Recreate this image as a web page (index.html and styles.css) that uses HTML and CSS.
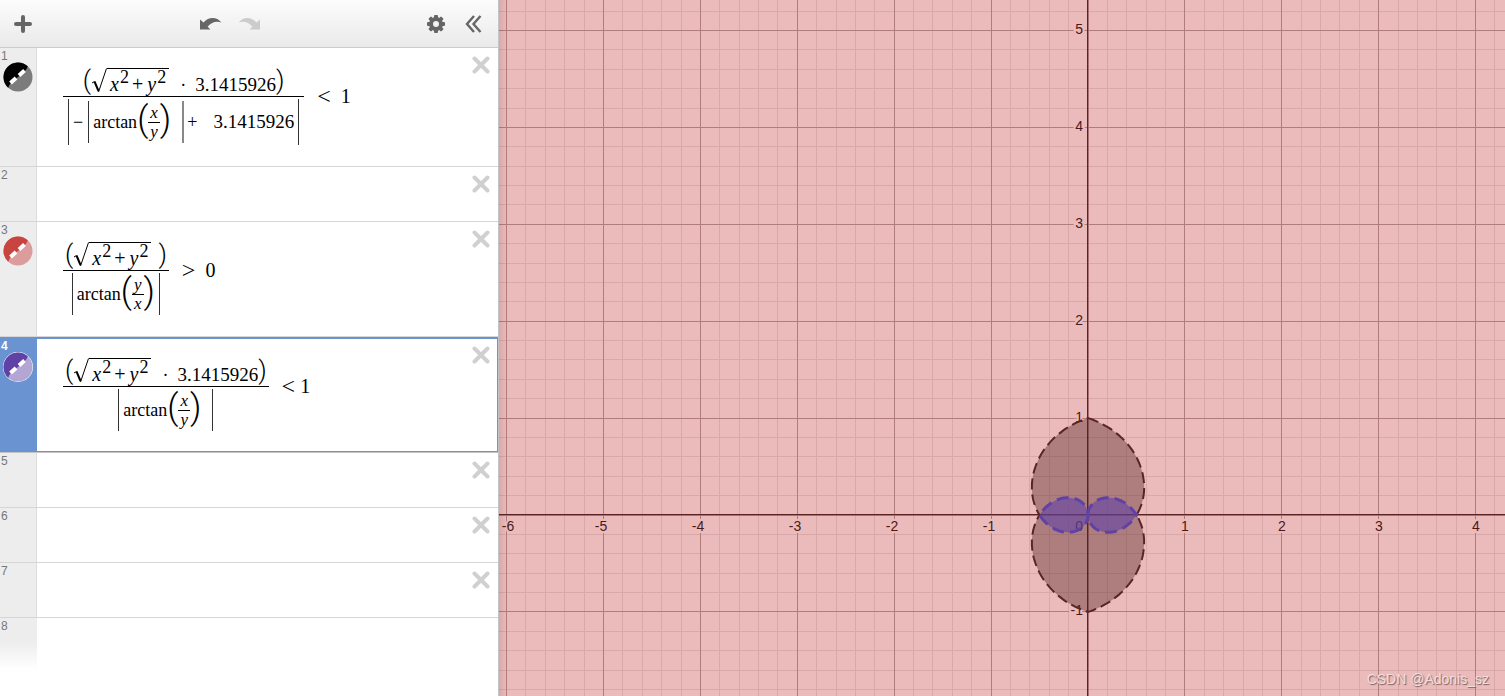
FILE: index.html
```html
<!DOCTYPE html>
<html lang="en">
<head>
<meta charset="utf-8">
<title>Graphing Calculator</title>
<link rel="stylesheet" href="styles.css">
</head>
<body>
<svg class="defs" aria-hidden="true">
  <symbol id="close" viewBox="0 0 18 18"><path d="M2.5 2.5 15.5 15.5M15.5 2.5 2.5 15.5" fill="none" stroke="currentColor" stroke-width="4" stroke-linecap="round"/></symbol>
  <symbol id="undo" viewBox="0 0 22 14"><path d="M0 2.500V12.500H10.500L7.600 9.700C10.500 6 15.500 3.600 21.300 5.400 16.800-.2 8.800-.6 3.500 5.600Z" fill="currentColor"/></symbol>
  <symbol id="shade" viewBox="0 0 30 30"><circle cx="15" cy="15" r="14.5" fill="currentColor" opacity=".48"/><path d="M5.2 25.7A14.5 14.5 0 1 1 24.8 4.3Q23.5 9 15 15 7 20 5.2 25.7Z" fill="currentColor"/><path d="M7.500 21 13 16M16 13.500 21.500 8.500" stroke="#fff" stroke-width="4" fill="none"/></symbol>
  <symbol id="root" viewBox="0 0 16 26"><path d="M1 15 3.500 13.500" stroke="#000" stroke-width="1" fill="none"/><path d="M3.500 13.500 7.500 23" stroke="#000" stroke-width="2" fill="none"/><path d="M7.500 24 15.500 .5" stroke="#000" stroke-width="1" fill="none"/></symbol>
</svg>
<div class="app">
  <section class="panel" aria-label="Expressions">
    <header class="toolbar">
      <button class="tool" aria-label="Add item"><svg width="18" height="18" viewBox="0 0 18 18"><path d="M9 2V16M2 9H16" stroke="currentColor" stroke-width="4" stroke-linecap="round"/></svg></button>
      <div class="group">
        <button class="tool" aria-label="Undo"><svg width="22" height="14"><use href="#undo"/></svg></button>
        <button class="tool faded" aria-label="Redo" disabled><svg class="flip" width="22" height="14"><use href="#undo"/></svg></button>
      </div>
      <div class="group">
        <button class="tool" aria-label="Settings"><svg width="18" height="18" viewBox="-9 -9 18 18"><g fill="currentColor"><rect x="-2" y="-9" width="4" height="18" rx="1"/><rect x="-2" y="-9" width="4" height="18" rx="1" transform="rotate(45)"/><rect x="-2" y="-9" width="4" height="18" rx="1" transform="rotate(90)"/><rect x="-2" y="-9" width="4" height="18" rx="1" transform="rotate(135)"/></g><circle r="5" fill="#f4f4f4" stroke="currentColor" stroke-width="4"/></svg></button>
        <button class="tool" aria-label="Hide list"><svg width="17" height="18" viewBox="0 0 17 18"><path d="M9 1 2 9 9 17M15.500 1 8.500 9 15.500 17" fill="none" stroke="currentColor" stroke-width="2.400"/></svg></button>
      </div>
    </header>
    <ol class="list">
      <li class="row">
        <div class="gutter"><span>1</span><button class="swatch black" aria-label="Toggle expression 1"><svg width="30" height="30"><use href="#shade"/></svg></button></div>
        <div class="math">
          <div class="frac">
            <div class="num"><span class="paren">(</span><svg class="root" width="16" height="26"><use href="#root"/></svg><span class="radicand"><i>x</i><sup>2</sup><span class="op">+</span><i>y</i><sup>2</sup></span><span class="dot">·</span><span class="value">3.1415926</span><span class="paren">)</span></div>
            <div class="den"><span class="abs tall"><span class="minus">−</span><span class="abs"><span>arctan</span><span class="paren big">(</span><span class="small"><i>x</i><i>y</i></span><span class="paren big">)</span><span class="space"></span></span><span class="plus">+</span><span class="value">3.1415926</span></span></div>
          </div>
          <span class="rel">&lt;</span><span class="rhs">1</span>
        </div>
        <button class="close" aria-label="Delete 1"><svg width="18" height="18"><use href="#close"/></svg></button>
      </li>
      <li class="row">
        <div class="gutter"><span>2</span></div><input class="blank" aria-label="Expression 2"><button class="close" aria-label="Delete 2"><svg width="18" height="18"><use href="#close"/></svg></button>
      </li>
      <li class="row">
        <div class="gutter"><span>3</span><button class="swatch red" aria-label="Toggle expression 3"><svg width="30" height="30"><use href="#shade"/></svg></button></div>
        <div class="math">
          <div class="frac">
            <div class="num"><span class="paren">(</span><svg class="root" width="16" height="26"><use href="#root"/></svg><span class="radicand"><i>x</i><sup>2</sup><span class="op">+</span><i>y</i><sup>2</sup></span><span class="space"></span><span class="paren">)</span></div>
            <div class="den"><span class="abs"><span>arctan</span><span class="paren big">(</span><span class="small"><i>y</i><i>x</i></span><span class="paren big">)</span></span></div>
          </div>
          <span class="rel">&gt;</span><span class="rhs">0</span>
        </div>
        <button class="close" aria-label="Delete 3"><svg width="18" height="18"><use href="#close"/></svg></button>
      </li>
      <li class="row selected">
        <div class="gutter"><span>4</span><button class="swatch purple" aria-label="Toggle expression 4"><svg width="30" height="30"><use href="#shade"/></svg></button></div>
        <div class="math">
          <div class="frac">
            <div class="num"><span class="paren">(</span><svg class="root" width="16" height="26"><use href="#root"/></svg><span class="radicand"><i>x</i><sup>2</sup><span class="op">+</span><i>y</i><sup>2</sup></span><span class="dot">·</span><span class="value">3.1415926</span><span class="paren">)</span></div>
            <div class="den"><span class="abs"><span>arctan</span><span class="paren big">(</span><span class="small"><i>x</i><i>y</i></span><span class="paren big">)</span><span class="space"></span></span></div>
          </div>
          <span class="rel tight">&lt;</span><span class="rhs">1</span>
        </div>
        <button class="close" aria-label="Delete 4"><svg width="18" height="18"><use href="#close"/></svg></button>
      </li>
      <li class="row">
        <div class="gutter"><span>5</span></div><input class="blank" aria-label="Expression 5"><button class="close" aria-label="Delete 5"><svg width="18" height="18"><use href="#close"/></svg></button>
      </li>
      <li class="row">
        <div class="gutter"><span>6</span></div><input class="blank" aria-label="Expression 6"><button class="close" aria-label="Delete 6"><svg width="18" height="18"><use href="#close"/></svg></button>
      </li>
      <li class="row">
        <div class="gutter"><span>7</span></div><input class="blank" aria-label="Expression 7"><button class="close" aria-label="Delete 7"><svg width="18" height="18"><use href="#close"/></svg></button>
      </li>
      <li class="row last">
        <div class="gutter"><span>8</span></div><input class="blank" aria-label="Expression 8">
      </li>
    </ol>
  </section>
  <main class="graph">
    <svg id="plot" class="plot" viewBox="0 0 1006 696" preserveAspectRatio="xMinYMin slice" role="img" aria-label="Graph"></svg>
    <span class="credit">CSDN @Adonis_sz</span>
  </main>
</div>
<script src="graph.js"></script>
</body>
</html>
```
FILE: styles.css
```css
* { box-sizing: border-box; }
body { margin: 0; background: #fff; font-family: "Liberation Sans", Arial, sans-serif; }
button { border: 0; padding: 0; background: none; color: inherit; display: block; }
svg { display: block; }
.defs { position: absolute; width: 0; height: 0; }
.app { display: flex; height: 100vh; overflow: hidden; }
.panel { flex: 0 0 499px; border-right: 1px solid #c4c4c4; background: #fff; }
.toolbar { display: flex; align-items: center; justify-content: space-between; height: 48px; padding: 0 16px 0 14px; border-bottom: 1px solid #ccc; background: linear-gradient(#fcfcfc, #eaeaea); color: #666; }
.group { display: flex; align-items: center; gap: 20px; }
.group .tool + .faded { margin-left: -4px; }
.faded { color: #ccc; }
.flip { transform: scaleX(-1); }
.list { list-style: none; margin: 0; padding: 0; }
.row { display: flex; align-items: stretch; border-bottom: 1px solid #d6d6d6; }
.gutter { flex: 0 0 37px; padding: 3px 0 0 1px; border-right: 1px solid #ddd; background: #ededed; color: #777; font-size: 12px; line-height: 11px; }
.swatch { margin-left: 2px; }
.black { color: #000; }
.red { color: #c74440; }
.purple { color: #6042a6; }
.purple svg { border-radius: 50%; background: #fff; }
.close { align-self: flex-start; margin: 8px 8px 0 0; color: #d0d0d0; }
.blank { flex: 1; min-width: 0; height: 54px; padding: 0 26px; border: 0; outline: 0; background: transparent; font: 20px "Liberation Serif", serif; }
.selected { border-top: 2px solid #6a93d1; border-bottom: 1px solid #6a93d1; border-right: 1px solid #6a93d1; box-shadow: 0 1px #c4c4c4; margin-bottom: 1px; }
.selected .gutter { background: #6a93d1; border-color: #6a93d1; color: #fff; font-weight: bold; padding-top: 2px; }
.selected .math { padding: 17px 0 20px 26px; }
.selected .close { margin: 7px 7px 0 0; }
.last { border-bottom: 0; }
.last .gutter { border-right: 0; background: linear-gradient(#ededed 45%, #fff 95%); }

.math { flex: 1; display: flex; align-items: flex-start; padding: 18px 0 21px 26px; font: 18px/20px "Liberation Serif", "Times New Roman", serif; color: #000; }
.num, .den, .abs { display: flex; justify-content: center; align-items: center; }
.num { height: 30px; align-items: flex-start; padding: 0 2px; border-bottom: 1px solid #000; box-sizing: content-box; }
.den { padding: 2px 5px 0; }
.abs { height: 42px; padding: 0 4px; border: solid #333; border-width: 0 1px; }
.abs .abs { border-right: 2px solid #888; }
.tall { height: 46px; }
.paren { font-family: Roboto, sans-serif; font-weight: 300; font-size: 26px; line-height: 28px; }
.big { padding-bottom: 4px; font-size: 35px; line-height: 40px; }
.root { margin-top: 2px; }
.radicand { display: flex; height: 26px; margin-top: 2px; padding: 5px 3px 0 3px; border-top: 1px solid #000; font-size: 20px; }
.radicand sup { margin-top: -7px; padding-left: 1px; font-size: 18px; line-height: 20px; }
.op { padding: 0 4px 0 3px; }
.value { font-size: 19px; }
.num .value { margin-top: 9px; }
.dot { margin: 9px 9px 0 11px; }
.minus { padding: 0 5px 0 0; }
.plus { padding: 0 16px 0 3px; }
.space { width: 7px; }
.small { display: flex; flex-direction: column; align-items: center; font-size: 17px; line-height: 18px; }
.small i { padding: 0 2px; }
.small i + i { border-top: 1px solid #000; }
.rel { margin: 20px 10px 0 13px; font-size: 24px; }
.tight { margin-right: 5px; }
.rhs { margin-top: 20px; font-size: 20px; }

.graph { position: relative; flex: 1; min-width: 0; background: #ebbbbb; overflow: hidden; }
.graph::before { content: ""; position: absolute; inset: 0 auto 0 0; width: 8px; background: linear-gradient(90deg, rgba(90, 30, 30, .12), transparent); }
.plot { width: 100%; height: 100%; font: 14px "Liberation Sans", Arial, sans-serif; }
.minor { fill: #d9a8a8; }
.major { fill: #b07c7c; }
.axis { fill: #5a2424; }
.axis-soft { fill: #a87272; }
.label { fill: #4c1818; stroke: #ebbbbb; stroke-width: 4px; paint-order: stroke; }
.outer { fill: rgba(82, 34, 34, .4); stroke: #5a2424; stroke-width: 2px; stroke-dasharray: 11 5; }
.inner { fill: rgba(96, 66, 166, .6); stroke: #6042a6; stroke-width: 3px; stroke-dasharray: 12 6; }
.credit { position: absolute; right: 16px; bottom: 8px; font-size: 14px; line-height: 18px; color: #f2dede; text-shadow: 1px 1px 1px #776060; }
```
FILE: graph.js
```js
const plot = document.getElementById('plot');
const NS = 'http://www.w3.org/2000/svg';
const unit = 96.9, ox = 588.5, oy = 514.5, W = 1006, H = 696;

function add(tag, attrs, text) {
  const el = document.createElementNS(NS, tag);
  for (const key in attrs) el.setAttribute(key, attrs[key]);
  if (text !== undefined) el.textContent = text;
  plot.appendChild(el);
}
function vertical(x, cls) { add('rect', { x: x, y: 0, width: 1, height: H, class: cls }); }
function horizontal(y, cls) { add('rect', { x: 0, y: y, width: W, height: 1, class: cls }); }

for (const major of [false, true]) {
  for (let k = -31; k <= 31; k++) {
    if ((k % 5 === 0) !== major || k === 0) continue;
    const x = Math.round(ox + k * unit / 5);
    const y = Math.round(oy + k * unit / 5);
    const cls = major ? 'major' : 'minor';
    if (x >= 0 && x < W) vertical(x, cls);
    if (y >= 0 && y < H) horizontal(y, cls);
  }
}
vertical(588, 'axis'); vertical(589, 'axis-soft');
horizontal(514, 'axis'); horizontal(515, 'axis-soft');

for (let n = -6; n <= 4; n++) {
  if (n === 0) continue;
  const x = n === -6 ? 9 : ox + n * unit - (n < 0 ? 2 : -1);
  add('text', { x: Math.round(x), y: 531, 'text-anchor': 'middle', class: 'label' }, n);
}
for (let n = -1; n <= 5; n++) {
  const y = n === 0 ? 531 : Math.round(oy - n * unit) + 4;
  add('text', { x: 584, y: y, 'text-anchor': 'end', class: 'label' }, n);
}

// Angle t is measured from the y axis.
function trace(radius) {
  const points = [];
  for (const [sx, sy, reverse] of [[1, 1, false], [1, -1, true], [-1, -1, false], [-1, 1, true]]) {
    for (let i = 0; i <= 60; i++) {
      const t = (reverse ? 60 - i : i) / 60 * Math.PI / 2;
      const r = radius(t) * unit;
      points.push((ox + 0.5 + sx * r * Math.sin(t)).toFixed(1) + ' ' + (oy + 0.5 - sy * r * Math.cos(t)).toFixed(1));
    }
  }
  return 'M' + points.join('L') + 'Z';
}
add('path', { class: 'outer', d: trace(t => 1 - t / Math.PI) });
add('path', { class: 'inner', d: trace(t => t / Math.PI) });
```
